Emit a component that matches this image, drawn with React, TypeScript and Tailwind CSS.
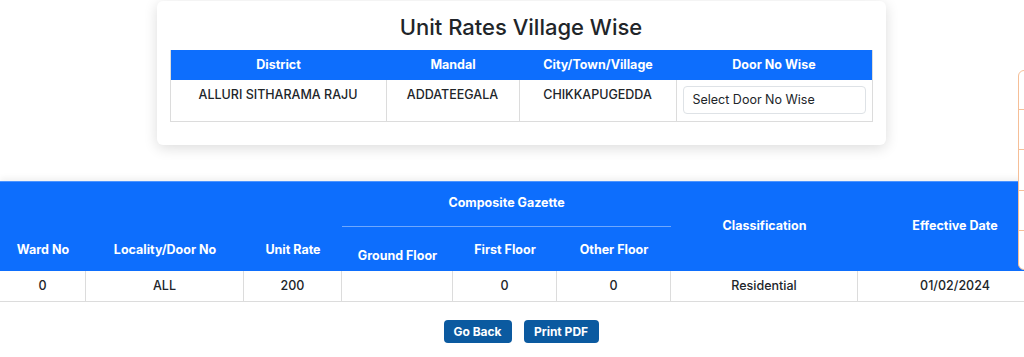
import React from "react";

const topHead = ["District", "Mandal", "City/Town/Village", "Door No Wise"];

const lowerCols = "grid-cols-[86px_158px_98px_111px_104px_114px_187px_194px]";

export default function App() {
  return (
    <div className="relative h-[357px] w-[1024px] overflow-hidden bg-white font-['Inter',sans-serif] text-[#212529]">
      <div className="flex w-[1042px] flex-col items-center">
        {/* Top card */}
        <div className="mt-px w-[729px] rounded-md bg-white px-[13px] pb-[23px] shadow-[0_3px_14px_rgba(0,0,0,0.14)]">
          <h3 className="flex h-[49px] items-center justify-center pt-1 text-[22px] font-medium text-[#212529]">
            Unit Rates Village Wise
          </h3>
          <div className="border border-t-0 border-[#dcdcdc]">
            <div className="grid h-[30px] grid-cols-[216px_133px_157px_1fr] bg-[#0d6efd] text-[12.5px] font-bold text-white">
              {topHead.map((h) => (
                <div key={h} className="flex items-center justify-center">
                  {h}
                </div>
              ))}
            </div>
            <div className="grid h-[41px] grid-cols-[216px_133px_157px_1fr] text-[12.5px] font-medium uppercase">
              <div className="border-r border-[#dcdcdc] pt-[5px] text-center leading-[20px]">ALLURI SITHARAMA RAJU</div>
              <div className="border-r border-[#dcdcdc] pt-[5px] text-center leading-[20px]">ADDATEEGALA</div>
              <div className="border-r border-[#dcdcdc] pt-[5px] text-center leading-[20px]">CHIKKAPUGEDDA</div>
              <div className="px-[6px] py-[6px]">
                <div className="flex h-[28px] items-center rounded border border-[#dee2e6] pl-[9px] text-[12.5px] font-normal normal-case text-[#212529]">
                  Select Door No Wise
                </div>
              </div>
            </div>
          </div>
        </div>

        {/* Lower table */}
        <div className="mt-[36px] w-[1052px] self-start">
          <div className={`grid h-[90px] ${lowerCols} grid-rows-2 border-t border-[#4d94ff] bg-[#0d6efd] text-[12.5px] font-bold text-white shadow-[0_-3px_6px_rgba(0,0,0,0.06)]`}>
            <div className="col-start-4 col-end-7 row-start-1 flex items-center justify-center border-b border-[#6ea8fe]">
              Composite Gazette
            </div>
            <div className="col-start-7 row-span-2 row-start-1 flex items-center justify-center">Classification</div>
            <div className="col-start-8 row-span-2 row-start-1 flex items-center justify-center">Effective Date</div>
            <div className="col-start-1 row-start-2 flex items-center justify-center pt-[4px]">Ward No</div>
            <div className="col-start-2 row-start-2 flex items-center justify-center pt-[4px]">Locality/Door No</div>
            <div className="col-start-3 row-start-2 flex items-center justify-center pt-[4px]">Unit Rate</div>
            <div className="col-start-4 row-start-2 flex items-center justify-center pt-[16px]">Ground Floor</div>
            <div className="col-start-5 row-start-2 flex items-center justify-center pt-[4px]">First Floor</div>
            <div className="col-start-6 row-start-2 flex items-center justify-center pt-[4px]">Other Floor</div>
          </div>
          <div className={`grid h-[31px] ${lowerCols} border-b border-[#dcdcdc] text-[12.5px] font-medium`}>
            <div className="flex items-center justify-center border-r border-[#dcdcdc]">0</div>
            <div className="flex items-center justify-center border-r border-[#dcdcdc]">ALL</div>
            <div className="flex items-center justify-center border-r border-[#dcdcdc]">200</div>
            <div className="flex items-center justify-center border-r border-[#dcdcdc]"></div>
            <div className="flex items-center justify-center border-r border-[#dcdcdc]">0</div>
            <div className="flex items-center justify-center border-r border-[#dcdcdc]">0</div>
            <div className="flex items-center justify-center border-r border-[#dcdcdc]">Residential</div>
            <div className="flex items-center justify-center">01/02/2024</div>
          </div>
        </div>

        {/* Buttons */}
        <div className="mt-[18px] flex gap-3">
          <button className="h-[23px] w-[68px] rounded bg-[#0b5aa0] text-[12px] font-bold text-white">Go Back</button>
          <button className="h-[23px] w-[75px] rounded bg-[#0b5aa0] text-[12px] font-bold text-white">Print PDF</button>
        </div>
      </div>

      {/* Floating side panel (partially visible, lies over the table) */}
      <div className="absolute left-[1018px] top-[70px] w-[60px] overflow-hidden rounded-md border border-[#f6bf97] bg-white">
        <div className="h-[39px] border-b border-[#f6bf97]"></div>
        <div className="h-[40px] border-b border-[#f6bf97]"></div>
        <div className="h-[41px] border-b border-[#f6bf97]"></div>
        <div className="h-[40px] border-b border-[#f6bf97]"></div>
        <div className="h-[38px]"></div>
      </div>
    </div>
  );
}
